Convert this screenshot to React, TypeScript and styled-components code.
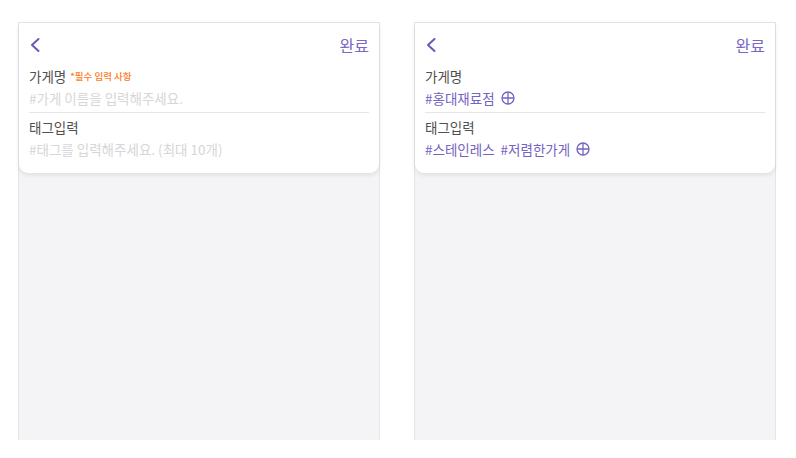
import React from "react";
import styled, { createGlobalStyle } from "styled-components";

const GlobalStyle = createGlobalStyle`
  body {
    margin: 0;
    background: #ffffff;
    font-family: "Noto Sans CJK KR", "Noto Sans", sans-serif;
  }
`

type Tag = string

const StoreForm = ({ name, tags }: { name?: string; tags?: Tag[] }) => {
  return (
    <Frame>
      <Card>
        <Header>
          <BackButton>
            <svg width="12" height="16" viewBox="0 0 12 16">
              <path d="M9.5 2 L3 8 L9.5 14" fill="none" stroke="#6a58b8" strokeWidth="2" strokeLinecap="round" strokeLinejoin="round" />
            </svg>
          </BackButton>
          <DoneButton>완료</DoneButton>
        </Header>
        <Field>
          <Label>
            가게명
            {!name && <Required>*필수 입력 사항</Required>}
          </Label>
          {name ? (
            <TagRow>
              <TagText>#{name}</TagText>
              <AddIcon />
            </TagRow>
          ) : (
            <Placeholder>#가게 이름을 입력해주세요.</Placeholder>
          )}
        </Field>
        <Divider />
        <Field>
          <Label>태그입력</Label>
          {tags && tags.length ? (
            <TagRow>
              {tags.map((t) => <TagText key={t}>#{t}</TagText>)}
              <AddIcon />
            </TagRow>
          ) : (
            <Placeholder>#태그를 입력해주세요. (최대 10개)</Placeholder>
          )}
        </Field>
      </Card>
    </Frame>
  )
}

const AddIcon = () => (
  <svg width="14" height="14" viewBox="0 0 14 14">
    <circle cx="7" cy="7" r="6" fill="none" stroke="#7563c2" strokeWidth="1.3" />
    <path d="M7 1 V13 M1 7 H13" stroke="#7563c2" strokeWidth="1.3" />
  </svg>
)

const App = () => {
  return (
    <>
      <GlobalStyle />
      <Page>
        <StoreForm />
        <StoreForm name="홍대재료점" tags={["스테인레스", "저렴한가게"]} />
      </Page>
    </>
  )
}

const Page = styled.div`
  display: flex;
  gap: 34px;
  padding: 22px 18px 0;
`

const Frame = styled.div`
  width: 360px;
  height: 417px;
  border: 1px solid #e5e5e7;
  border-bottom: none;
  background: #f4f4f6;
`

const Card = styled.div`
  background: #ffffff;
  border-radius: 0 0 9px 9px;
  box-shadow: 0 2px 5px rgba(0, 0, 0, 0.09);
  padding: 0 10px 10px;
`

const Header = styled.div`
  display: flex;
  justify-content: space-between;
  align-items: center;
  height: 44px;
`

const BackButton = styled.button`
  border: none;
  background: transparent;
  padding: 0;
  display: flex;
  cursor: pointer;
`

const DoneButton = styled.button`
  border: none;
  background: transparent;
  padding: 0;
  font-family: inherit;
  font-size: 16px;
  color: #7a68c6;
  cursor: pointer;
`

const Field = styled.div`
  display: flex;
  flex-direction: column;
  gap: 4px;
  padding-bottom: 5px;
`

const Label = styled.div`
  display: flex;
  align-items: center;
  gap: 4px;
  font-size: 13.5px;
  line-height: 18px;
  color: #505050;
`

const Required = styled.span`
  font-size: 9.5px;
  font-weight: 500;
  color: #ff7a1e;
`

const Placeholder = styled.div`
  font-size: 13.5px;
  line-height: 18px;
  color: #d6d6d8;
`

const TagRow = styled.div`
  display: flex;
  align-items: center;
  gap: 6px;
  height: 18px;
`

const TagText = styled.span`
  font-size: 13.5px;
  line-height: 18px;
  color: #7563c2;
`

const Divider = styled.div`
  height: 1px;
  background: #e6e6e8;
  margin-bottom: 5px;
`

export default App
